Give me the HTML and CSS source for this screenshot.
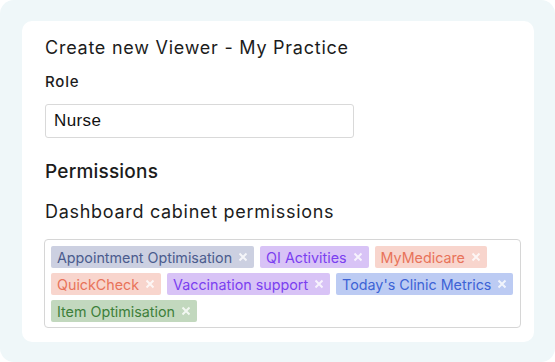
FILE: index.html
```html
<!DOCTYPE html>
<html lang="en">
<head>
    <meta charset="UTF-8">
    <meta name="viewport" content="width=device-width, initial-scale=1.0">
    <title>Create new Viewer</title>
    <link rel="stylesheet" href="styles.css">
</head>
<body>
    <div class="frame">
        <section class="card">
            <h1>Create new Viewer - My Practice</h1>
            <label class="field-label" for="role">Role</label>
            <input class="role-input" id="role" type="text" value="Nurse">
            <h2>Permissions</h2>
            <p class="sub-label">Dashboard cabinet permissions</p>
            <div class="tag-box">
                <span class="tag tag-slate">Appointment Optimisation<svg class="tag-x" viewBox="0 0 10 10"><path d="M1.5 1.5 8.5 8.5M8.5 1.5 1.5 8.5"/></svg></span>
                <span class="tag tag-purple">QI Activities<svg class="tag-x" viewBox="0 0 10 10"><path d="M1.5 1.5 8.5 8.5M8.5 1.5 1.5 8.5"/></svg></span>
                <span class="tag tag-salmon">MyMedicare<svg class="tag-x" viewBox="0 0 10 10"><path d="M1.5 1.5 8.5 8.5M8.5 1.5 1.5 8.5"/></svg></span>
                <span class="tag tag-salmon">QuickCheck<svg class="tag-x" viewBox="0 0 10 10"><path d="M1.5 1.5 8.5 8.5M8.5 1.5 1.5 8.5"/></svg></span>
                <span class="tag tag-purple">Vaccination support<svg class="tag-x" viewBox="0 0 10 10"><path d="M1.5 1.5 8.5 8.5M8.5 1.5 1.5 8.5"/></svg></span>
                <span class="tag tag-blue">Today's Clinic Metrics<svg class="tag-x" viewBox="0 0 10 10"><path d="M1.5 1.5 8.5 8.5M8.5 1.5 1.5 8.5"/></svg></span>
                <span class="tag tag-green">Item Optimisation<svg class="tag-x" viewBox="0 0 10 10"><path d="M1.5 1.5 8.5 8.5M8.5 1.5 1.5 8.5"/></svg></span>
            </div>
        </section>
    </div>
</body>
</html>
```

FILE: styles.css
```css
body {
    margin: 0;
    background-color: #fff;
    font-family: Inter, "Noto Sans", sans-serif;
    color: #1c1c1c;
}
.frame {
    width: 555px;
    height: 362px;
    box-sizing: border-box;
    padding: 21px 21px 20px 22px;
    background-color: #eff7f9;
    border-radius: 14px;
}
.card {
    height: 100%;
    box-sizing: border-box;
    padding: 13px 13px 14px 23px;
    background: #fff;
    border-radius: 10px;
    display: flex;
    flex-direction: column;
    align-items: flex-start;
}
.card h1 {
    margin: 0;
    font-size: 18px;
    line-height: 28px;
    font-weight: 400;
    letter-spacing: 0.75px;
}
.field-label {
    margin-top: 9px;
    font-size: 15px;
    line-height: 22px;
    font-weight: 500;
    letter-spacing: 0.8px;
}
.role-input {
    margin-top: 11px;
    width: 309px;
    height: 34px;
    box-sizing: border-box;
    padding: 0 8px;
    border: 1px solid #d9d9d9;
    border-radius: 3px;
    font-family: "Liberation Sans", Arial, sans-serif;
    font-size: 17px;
    letter-spacing: 0.4px;
    color: #111;
}
.card h2 {
    margin: 21px 0 0;
    font-size: 19px;
    line-height: 26px;
    font-weight: 500;
    letter-spacing: 0.2px;
}
.sub-label {
    margin: 15px 0 0;
    font-size: 18px;
    line-height: 24px;
    letter-spacing: 0.7px;
}
.tag-box {
    margin: 15px 0 0 -1px;
    width: 477px;
    box-sizing: border-box;
    padding: 6px 5px 5px 6px;
    border: 1px solid #d6d6d6;
    border-radius: 4px;
    display: flex;
    flex-wrap: wrap;
    gap: 5px 6px;
}
.tag {
    display: inline-flex;
    align-items: center;
    height: 22px;
    padding: 0 6px;
    border-radius: 2px;
    font-size: 14.3px;
    white-space: nowrap;
}
.tag-x {
    width: 10px;
    height: 10px;
    margin-left: 6px;
    stroke: #fff;
    stroke-width: 2;
    opacity: 0.8;
}
.tag-slate { background: #ccd0e1; color: #4b5c8e; }
.tag-purple { background: #d8c3f6; color: #7b3ff0; }
.tag-salmon { background: #f8d5cd; color: #e8735a; }
.tag-blue { background: #bccbf3; color: #3d63d6; }
.tag-green { background: #c2d8be; color: #3d7f3a; }
```
